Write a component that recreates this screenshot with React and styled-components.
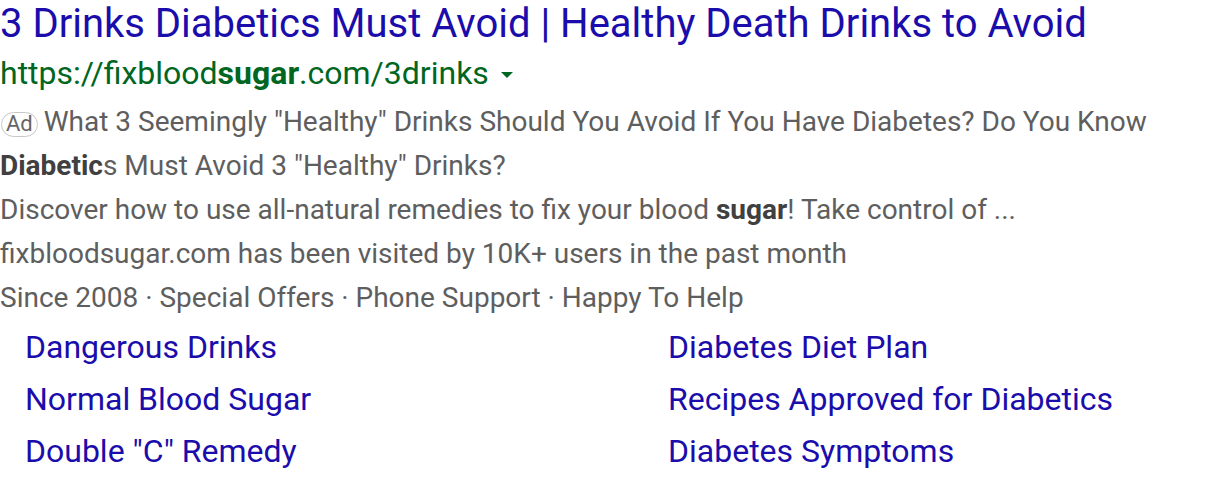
import React from 'react';
import styled, { createGlobalStyle } from 'styled-components'

const Global = createGlobalStyle`
body{
    margin: 0;
    background: #fff;
    font-family: Roboto, "Liberation Sans", Arial, sans-serif;
}
`

const sitelinks = [
    'Dangerous Drinks',
    'Diabetes Diet Plan',
    'Normal Blood Sugar',
    'Recipes Approved for Diabetics',
    'Double "C" Remedy',
    'Diabetes Symptoms',
]

const App = () => {
    return (
    <Wrapper>
        <Global />
        <Title href="#">3 Drinks Diabetics Must Avoid | Healthy Death Drinks to Avoid</Title>
        <UrlRow>
            <span>https://fixblood<b>sugar</b>.com/3drinks</span>
            <Arrow />
        </UrlRow>
        <Desc>
            <Line><Badge>Ad</Badge>What 3 Seemingly "Healthy" Drinks Should You Avoid If You Have Diabetes? Do You Know</Line>
            <Line><b>Diabetic</b>s Must Avoid 3 "Healthy" Drinks?</Line>
            <Line>Discover how to use all-natural remedies to fix your blood <b>sugar</b>! Take control of ...</Line>
            <Line>fixbloodsugar.com has been visited by 10K+ users in the past month</Line>
            <Line>Since 2008 · Special Offers · Phone Support · Happy To Help</Line>
        </Desc>
        <Sitelinks>
            {sitelinks.map((s) => (
                <a key={s} href="#">{s}</a>
            ))}
        </Sitelinks>
    </Wrapper>
    )
}

const Wrapper = styled.div`
width: 1216px;
`

const Title = styled.a`
display: block;
font-size: 40px;
line-height: 48px;
color: #1a0dab;
text-decoration: none;
white-space: nowrap;
`

const UrlRow = styled.div`
display: flex;
align-items: center;
font-size: 32px;
line-height: 50px;
color: #006621;
b{
    font-weight: 700;
}
`

const Arrow = styled.span`
display: inline-block;
margin-left: 12px;
margin-top: 4px;
width: 0;
height: 0;
border-left: 6px solid transparent;
border-right: 6px solid transparent;
border-top: 6px solid #006621;
`

const Desc = styled.div`
padding-top: 2px;
font-size: 28px;
line-height: 44px;
color: #5e5e5e;
b{
    color: #404040;
    font-weight: 700;
}
`

const Line = styled.div`
white-space: nowrap;
`

const Badge = styled.span`
display: inline-block;
box-sizing: border-box;
height: 25px;
line-height: 22px;
padding: 0 4px;
margin: 0 6px 0 1px;
border: 1px solid #c8c8c8;
border-radius: 13px;
font-size: 22px;
color: #666;
vertical-align: 0px;
`

const Sitelinks = styled.div`
display: grid;
grid-template-columns: 643px 1fr;
padding: 1px 0 0 25px;
a{
    font-size: 32px;
    line-height: 52px;
    color: #1a0dab;
    text-decoration: none;
    white-space: nowrap;
}
`

export default App
